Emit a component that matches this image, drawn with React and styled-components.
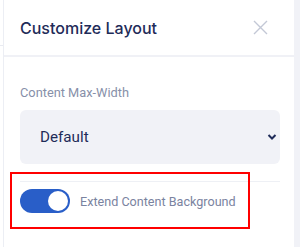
import React from "react";
import styled, { createGlobalStyle } from "styled-components";

const Global = createGlobalStyle`
  html, body { margin: 0; padding: 0; background: #ffffff; }
  body { width: 300px; height: 247px; overflow: hidden; }
`;

const Page = styled.div`
  display: flex;
  width: 300px;
  height: 247px;
`;

const LeftEdge = styled.div`
  width: 3px;
  border-right: 1px solid #eceef4;
  background: linear-gradient(to bottom, #fff 45px, #e9ebf1 45px, #e9ebf1 46px, #fff 46px);
`;

const RightEdge = styled.div`
  flex: 1;
  background: #f1f2f7;
`;

const Panel = styled.div`
  width: 290px;
  background: #ffffff;
  display: flex;
  flex-direction: column;
`;

const Header = styled.div`
  height: 57px;
  box-sizing: border-box;
  border-bottom: 2px solid #f0f1f6;
  display: flex;
  align-items: center;
  justify-content: space-between;
  padding: 0 26px 0 16px;
`;

const Title = styled.h2`
  margin: 0;
  font-family: "Inter", "Noto Sans", sans-serif;
  font-weight: 500;
  font-size: 16px;
  color: #1f2c59;
`;

const Close = styled.button`
  border: 0;
  background: none;
  padding: 0;
  width: 15px;
  height: 15px;
  display: flex;
  cursor: pointer;
`;

const Body = styled.div`
  padding: 28px 14px 0 16px;
  display: flex;
  flex-direction: column;
`;

const Label = styled.div`
  font-family: "Roboto", sans-serif;
  font-size: 12.8px;
  color: #8790a9;
  line-height: 16px;
`;

const SelectBox = styled.div`
  margin-top: 9px;
  height: 54px;
  border-radius: 6px;
  background: #f1f2f7;
  display: flex;
  align-items: center;
  justify-content: space-between;
  padding: 0 3px 0 20px;
  font-family: "Roboto", sans-serif;
  font-size: 15.2px;
  color: #1f2c59;
`;

const Divider = styled.div`
  margin-top: 17px;
  height: 1px;
  background: #eef0f5;
`;

const ToggleRow = styled.div`
  margin-top: 7px;
  display: flex;
  align-items: center;
  gap: 10px;
`;

const Track = styled.div`
  width: 50px;
  height: 24px;
  border-radius: 12px;
  background: ${p => (p.on ? "#295ec8" : "#d4d8e3")};
  display: flex;
  align-items: center;
  justify-content: ${p => (p.on ? "flex-end" : "flex-start")};
  padding: 0 2px;
  box-sizing: border-box;
`;

const Knob = styled.div`
  width: 20px;
  height: 20px;
  border-radius: 50%;
  background: #ffffff;
`;

const ToggleLabel = styled.span`
  font-family: "Roboto", sans-serif;
  font-size: 12.6px;
  color: #7a83a0;
`;

const Highlight = styled.div`
  position: absolute;
  left: 10px;
  top: 172px;
  width: 240px;
  height: 57px;
  box-sizing: border-box;
  border: 2px solid #ff0000;
  pointer-events: none;
`;

export default function App() {
  return (
    <>
      <Global />
      <Page>
        <LeftEdge />
        <Panel>
          <Header>
            <Title>Customize Layout</Title>
            <Close aria-label="close">
              <svg width="15" height="15" viewBox="0 0 15 15">
                <path d="M1 1L14 14M14 1L1 14" stroke="#c3c8d6" strokeWidth="1.4" />
              </svg>
            </Close>
          </Header>
          <Body>
            <Label>Content Max-Width</Label>
            <SelectBox>
              <span>Default</span>
              <svg width="10" height="8" viewBox="0 0 10 8">
                <path d="M1.5 2L5 5.5L8.5 2" stroke="#1f2c59" strokeWidth="2" fill="none" />
              </svg>
            </SelectBox>
            <Divider />
            <ToggleRow>
              <Track on>
                <Knob />
              </Track>
              <ToggleLabel>Extend Content Background</ToggleLabel>
            </ToggleRow>
          </Body>
        </Panel>
        <RightEdge />
      </Page>
      <Highlight />
    </>
  );
}
